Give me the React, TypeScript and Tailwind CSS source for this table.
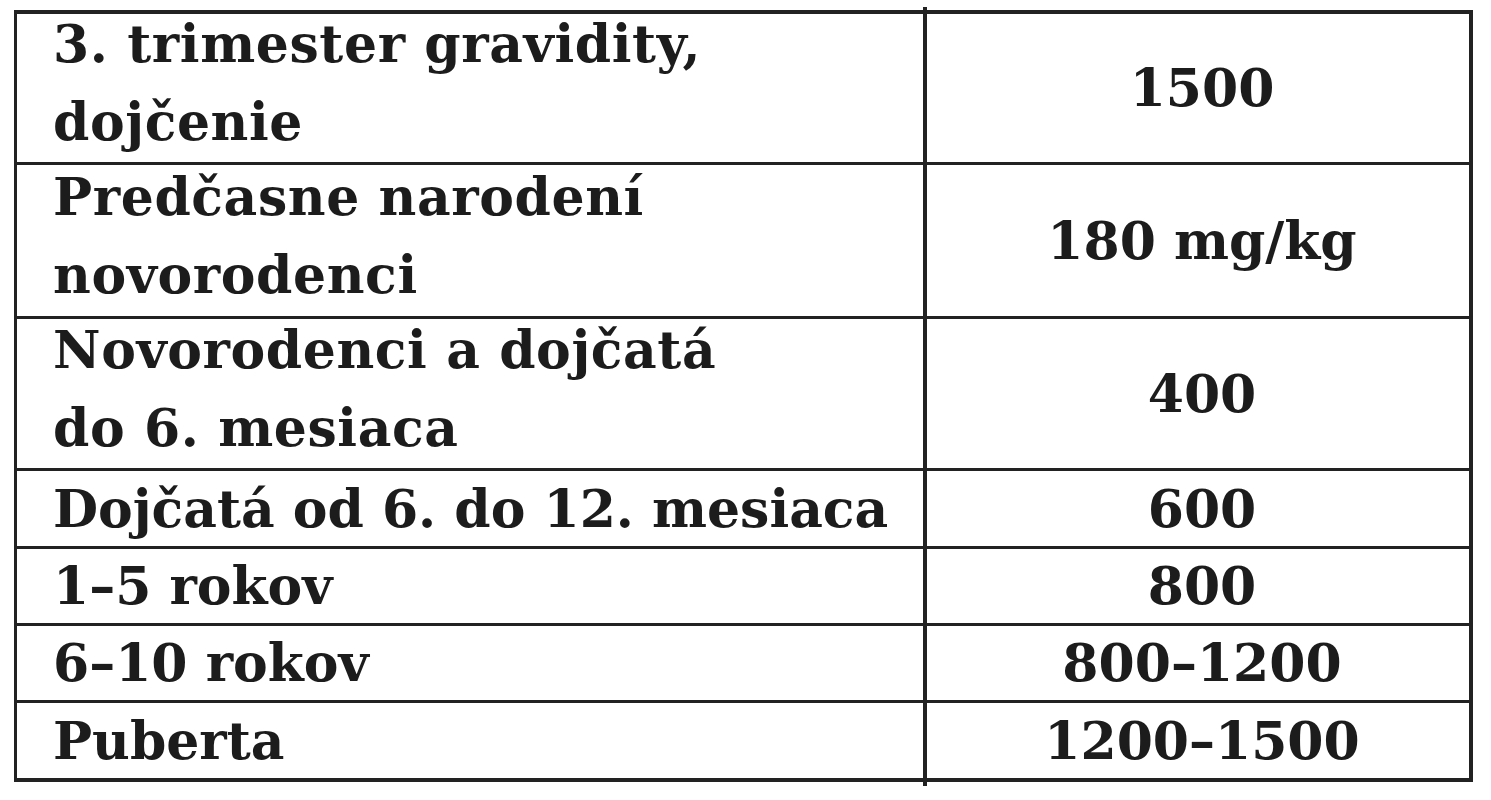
import React from "react";

const rows: { left: string[]; right: string; h: string; line: boolean }[] = [
  { left: ["3. trimester gravidity,", "dojčenie"], right: "1500", h: "h-[148px]", line: false },
  { left: ["Predčasne narodení", "novorodenci"], right: "180 mg/kg", h: "h-[154px]", line: true },
  { left: ["Novorodenci a dojčatá", "do 6. mesiaca"], right: "400", h: "h-[152px]", line: true },
  { left: ["Dojčatá od 6. do 12. mesiaca"], right: "600", h: "h-[78px]", line: true },
  { left: ["1–5 rokov"], right: "800", h: "h-[77px]", line: true },
  { left: ["6–10 rokov"], right: "800–1200", h: "h-[77px]", line: true },
  { left: ["Puberta"], right: "1200–1500", h: "h-[78px]", line: true },
];

export default function App() {
  return (
    <div className="w-[1491px] h-[800px] bg-white pt-[10px] pl-[14px] text-[#1c1c1c]" style={{ fontFamily: '"DejaVu Serif", serif' }}>
      <div className="relative w-[1459px] border-t-[4px] border-b-[4px] border-l-[3px] border-r-[4px] border-[#222222]">
        {rows.map((r, i) => (
          <div key={i} className={`flex ${r.h} ${r.line ? "border-t-[3px] border-[#222222]" : ""}`}>
            <div
              className={`w-[906px] flex flex-col justify-center pl-[36px] text-[52px] font-bold leading-[78px] ${
                r.left.length > 1 ? "pb-[10px] tracking-[0.6px]" : ""
              }`}
            >
              {r.left.map((t, j) => (
                <div key={j} className="whitespace-nowrap">{t}</div>
              ))}
            </div>
            <div className="w-[4px] shrink-0" />
            <div className="w-[542px] flex items-center justify-center pl-[8px] text-[52px] font-bold leading-[78px] whitespace-nowrap">
              {r.right}
            </div>
          </div>
        ))}
        <div className="absolute left-[906px] top-[-7px] bottom-[-8px] w-[4px] bg-[#222222]" />
      </div>
    </div>
  );
}
